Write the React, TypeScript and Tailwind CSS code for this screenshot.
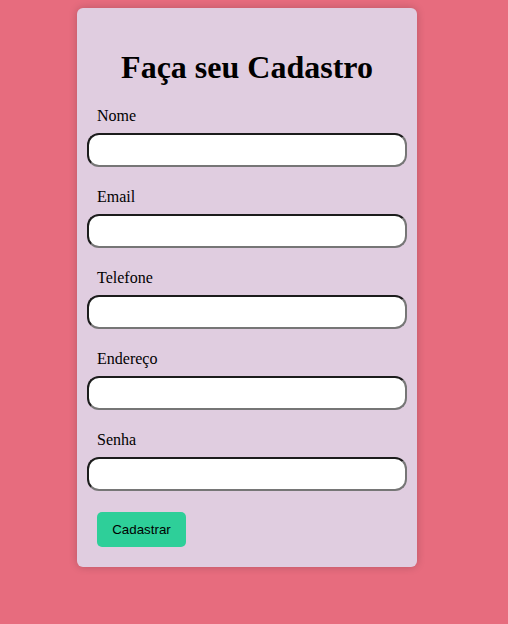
export default function App() {
  const fields = ["Nome", "Email", "Telefone", "Endereço", "Senha"];
  return (
    <div className="min-h-[624px] w-full bg-[#e76c7e] pt-[8px] pb-[40px]" style={{ fontFamily: '"Liberation Serif", serif' }}>
      <div className="ml-[77px] w-[340px] rounded-[6px] bg-[#e0cde0] px-[10px] pt-[20px] pb-[20px] shadow-[0_0_8px_rgba(0,0,0,0.2)]">
        <h1 className="my-[21px] text-center text-[32px] leading-[37px] font-bold text-black">Faça seu Cadastro</h1>
        <div className="flex flex-col">
          {fields.map((f, i) => (
            <div key={f} className={i === 0 ? "" : "mt-[21px]"}>
              <label className="ml-[10px] block text-[16px] leading-[18px] text-black">{f}</label>
              <input
                type={f === "Senha" ? "password" : "text"}
                className="mt-[8px] block h-[34px] w-[320px] rounded-[12px] border-2 border-t-[#1c1c1c] border-l-[#1c1c1c] border-b-[#767676] border-r-[#767676] bg-white px-2 outline-none"
              />
            </div>
          ))}
        </div>
        <button
          className="mt-[21px] ml-[10px] h-[35px] w-[89px] rounded-[5px] bg-[#2ecf99] text-[13.33px] text-black"
          style={{ fontFamily: '"Liberation Sans", Arial, sans-serif' }}
        >
          Cadastrar
        </button>
      </div>
    </div>
  );
}
